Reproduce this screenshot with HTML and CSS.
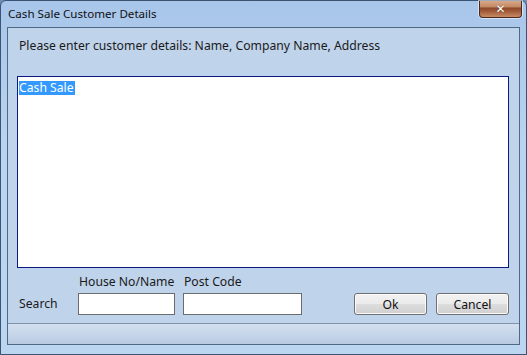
FILE: index.html
```html
<!DOCTYPE html>
<html>
<head>
<meta charset="utf-8">
<link rel="stylesheet" href="styles.css">
</head>
<body>
<div class="window">
  <div class="titlebar">
    <span class="title">Cash Sale Customer Details</span>
    <div class="close"><span class="x">✕</span></div>
  </div>
  <div class="client">
    <div class="main">
      <div class="prompt">Please enter customer details: Name, Company Name, Address</div>
      <div class="memo"><span class="sel">Cash Sale</span></div>
      <div class="bottom">
        <div class="search-label">Search</div>
        <div class="field f1">
          <div class="flabel">House No/Name</div>
          <div class="input"></div>
        </div>
        <div class="field f2">
          <div class="flabel">Post Code</div>
          <div class="input"></div>
        </div>
        <div class="buttons">
          <div class="btn">Ok</div>
          <div class="btn">Cancel</div>
        </div>
      </div>
    </div>
    <div class="status"></div>
  </div>
</div>
</body>
</html>
```
FILE: styles.css
```css
html, body {
  margin: 0;
  padding: 0;
  width: 527px;
  height: 355px;
  overflow: hidden;
  background: #6f8fb4;
}
.window {
  box-sizing: border-box;
  width: 527px;
  height: 355px;
  border: 1px solid #3c5472;
  border-radius: 6px 6px 0 0;
  background: linear-gradient(to bottom, #a8c6ea 0%, #b9d3f0 40%, #bcd6f2 100%);
  display: flex;
  flex-direction: column;
  padding: 0 6px 9px 6px;
  font-family: "Noto Sans", "Open Sans", sans-serif;
  font-size: 12.2px;
  color: #1a1a1a;
}
.titlebar {
  height: 26px;
  display: flex;
  align-items: flex-start;
  justify-content: space-between;
  flex: none;
}
.title {
  margin-top: 6px;
  margin-left: 1px;
  font-size: 11.6px;
  color: #111;
  line-height: 14px;
}
.close {
  width: 43px;
  height: 17px;
  margin-right: -2px;
  box-sizing: border-box;
  border: 1px solid #4a2a1c;
  border-top: none;
  border-radius: 0 0 4px 4px;
  background: linear-gradient(to bottom, #d8a98a 0%, #c48a66 35%, #8e4a2c 45%, #9c5634 60%, #c88a64 100%);
  box-shadow: 0 0 0 1px rgba(255,255,255,0.5);
  display: flex;
  align-items: center;
  justify-content: center;
}
.x {
  color: #fff;
  font-family: "DejaVu Sans", sans-serif;
  font-weight: bold;
  font-size: 12px;
  line-height: 12px;
  text-shadow: 0 0 1px #5a2a10;
}
.client {
  flex: 1;
  box-sizing: border-box;
  border: 1px solid #4f6886;
  background: #bfd3ea;
  display: flex;
  flex-direction: column;
}
.main {
  flex: 1;
  display: flex;
  flex-direction: column;
  padding: 11px 10px 0 9px;
}
.prompt {
  padding-left: 2px;
  line-height: 14px;
  height: 14px;
}
.memo {
  margin-top: 23px;
  height: 192px;
  box-sizing: border-box;
  border: 1px solid #0a1a80;
  background: #fff;
  padding: 2px 1px;
}
.sel {
  background: #3399ff;
  color: #fff;
  line-height: 14px;
  display: inline-block;
  padding-right: 1px;
}
.bottom {
  display: flex;
  align-items: flex-end;
  margin-top: 7px;
}
.search-label {
  margin-left: 2px;
  width: 59px;
  line-height: 14px;
  margin-bottom: 4px;
}
.field {
  display: flex;
  flex-direction: column;
  margin-right: 8px;
}
.flabel {
  line-height: 14px;
  margin-left: 1px;
  margin-bottom: 4px;
}
.input {
  box-sizing: border-box;
  height: 22px;
  border: 1px solid #6b6b6b;
  background: #fff;
}
.f1 .input { width: 97px; }
.f2 .input { width: 119px; }
.buttons {
  margin-left: auto;
  display: flex;
  gap: 9px;
}
.btn {
  box-sizing: border-box;
  width: 73px;
  height: 22px;
  border: 1px solid #707070;
  border-radius: 3px;
  background: linear-gradient(to bottom, #f2f2f2 0%, #ebebeb 48%, #dddddd 52%, #cfcfcf 100%);
  box-shadow: inset 0 0 0 1px #fbfbfb;
  display: flex;
  align-items: center;
  justify-content: center;
  color: #111;
}
.status {
  height: 20px;
  flex: none;
  border-top: 1px solid #7f93ab;
  background: linear-gradient(to bottom, #d2dff0 0%, #c4d4e8 60%, #b9cae0 100%);
}
```
